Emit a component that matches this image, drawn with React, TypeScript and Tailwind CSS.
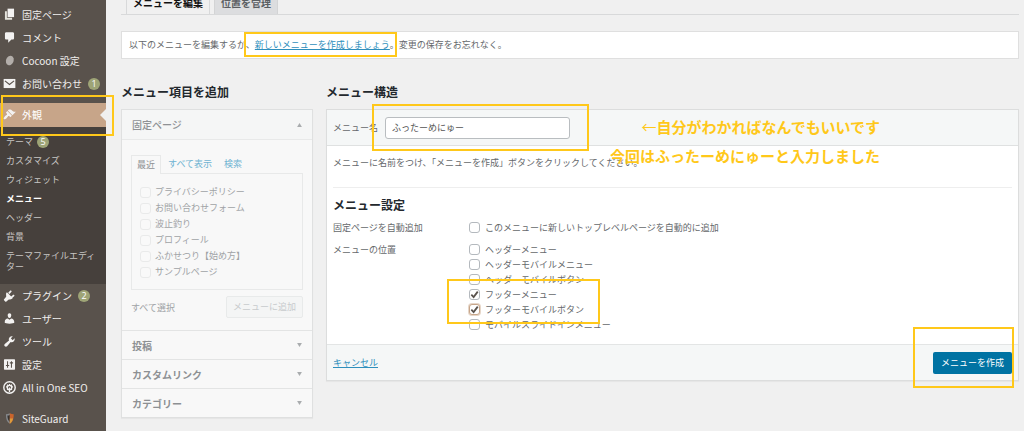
import type { ReactNode } from 'react';
import { useState } from 'react';

const FONT = "font-['Noto_Sans_CJK_JP','Noto_Sans',sans-serif]";

function Svg({ children }: { children: ReactNode }) {
  return (
    <svg viewBox="0 0 20 20" className="size-[13px] shrink-0" fill="#f3f2f1" aria-hidden="true">
      {children}
    </svg>
  );
}

const icons = {
  page: (
    <Svg>
      <path d="M7 1h10v13H7z" />
      <path d="M3 5h3v10h8v3H3z" fill="#e4e3dc" />
    </Svg>
  ),
  comment: (
    <Svg>
      <path d="M5 2h10c1.100 0 2 .9 2 2v7c0 1.100-.9 2-2 2h-2l-5 5v-5H5c-1.100 0-2-.9-2-2V4c0-1.100.9-2 2-2z" />
    </Svg>
  ),
  cocoon: (
    <Svg>
      <ellipse cx="10.500" cy="10" rx="5.800" ry="7.400" transform="rotate(22 10.500 10)" fill="#b3aeaa" />
    </Svg>
  ),
  mail: (
    <Svg>
      <path d="M1 3h18v14H1z" />
      <path d="M3 6l7 5.500L17 6" fill="none" stroke="#59524c" strokeWidth="1.800" />
    </Svg>
  ),
  brush: (
    <Svg>
      <path d="M14.480 11.060L7.410 3.990l1.500-1.500c.5-.56 2.300-.47 3.510.32 1.210.8 1.430 1.280 2.910 2.100 1.180.64 2.450 1.260 4.450.85zm-.71.710L6.700 4.700 4.930 6.470c-.39.390-.39 1.020 0 1.410l1.060 1.060c.39.390.39 1.030 0 1.420-.6.600-1.430 1.110-2.210 1.690-.35.260-.7.530-1.010.840C1.430 14.230.4 16.080 1.400 17.070c.99 1 2.840-.03 4.180-1.360.31-.31.58-.66.850-1.020.57-.78 1.080-1.610 1.690-2.210.39-.39 1.020-.39 1.410 0l1.060 1.060c.39.390 1.020.390 1.410 0z" />
    </Svg>
  ),
  plug: (
    <Svg>
      <path d="M13.110 4.360L9.870 7.600 8 5.730l3.240-3.240c.35-.34 1.050-.2 1.560.32.52.51.660 1.210.310 1.550zm-8 1.770l.91-1.120 9.010 9.010-1.190.84c-.71.710-2.630 1.160-3.820 1.160H8.900l-3.660 3.240c-.6.500-1.300.450-1.900-.1l-1.700-1.700c-.5-.6-.5-1.200 0-1.700L4.900 12v-1.190c0-1.190-.5-3.970.21-4.680zm7.260 5.970l3.240-3.240c.34-.35 1.040-.21 1.550.31.520.51.660 1.210.310 1.550l-3.240 3.250z" />
    </Svg>
  ),
  user: (
    <Svg>
      <path d="M10 9.250c-2.270 0-2.730-3.440-2.730-3.440C7 4.020 7.820 2 9.970 2c2.160 0 2.980 2.020 2.710 3.810 0 0-.41 3.440-2.680 3.440zm0 2.570L12.720 10c2.390 0 4.520 2.330 4.520 4.530v2.490s-3.650 1.130-7.240 1.130c-3.650 0-7.240-1.130-7.240-1.130v-2.490c0-2.250 1.940-4.480 4.470-4.480z" />
    </Svg>
  ),
  wrench: (
    <Svg>
      <path d="M16.680 9.770c-1.340 1.340-3.300 1.670-4.950.99l-5.410 6.520c-.99.990-2.590.990-3.580 0s-.99-2.590 0-3.570l6.520-5.420c-.68-1.650-.35-3.610.99-4.950 1.280-1.280 3.120-1.620 4.720-1.060l-2.890 2.890 2.820 2.820 2.860-2.870c.53 1.580.180 3.390-1.080 4.650z" />
    </Svg>
  ),
  sliders: (
    <Svg>
      <path d="M2.500 2h15c.6 0 1 .4 1 1v14c0 .6-.4 1-1 1h-15c-.6 0-1-.4-1-1V3c0-.6.4-1 1-1z" />
      <path d="M7 5v10M13 5v10M4.500 11.500h5M10.500 7.500h5" stroke="#59524c" strokeWidth="1.600" fill="none" />
    </Svg>
  ),
  gear: (
    <Svg>
      <circle cx="10" cy="10" r="8.800" fill="none" stroke="#f3f2f1" strokeWidth="2.200" />
      <path
        d="M10 4.500v3M4.700 9h2.500M15.300 9h-2.500M6.200 5.700l2 2M13.800 5.700l-2 2M6.300 13.500l1.700-1.500M13.700 13.500L12 12"
        stroke="#f3f2f1"
        strokeWidth="2"
      />
      <circle cx="10" cy="10" r="3.400" fill="none" stroke="#f3f2f1" strokeWidth="2" />
      <path d="M10 10v7" stroke="#f3f2f1" strokeWidth="2" />
    </Svg>
  ),
  shield: (
    <Svg>
      <path d="M10.500 2C8.500 3 6.500 3.500 4.500 3.500 4.500 11 6 15.500 10.500 18z" fill="#85888c" />
      <path d="M6.800 5.500c1.200-.1 2.700-.5 3.700-1v11C8 13.500 6.800 10 6.800 5.500z" fill="#38332f" />
      <path d="M10.500 2c2 1 4 1.500 6 1.500 0 7.500-1.500 12-6 14.500z" fill="#c9642c" />
      <path d="M10.500 10h5c-.8 3.500-2.500 6-5 8z" fill="#dd9c3c" />
    </Svg>
  ),
};

function Badge({ children }: { children: ReactNode }) {
  return (
    <span className="grid size-3 shrink-0 place-items-center rounded-full bg-[#9ea476] font-['Open_Sans',sans-serif] text-[9px] leading-none text-white">
      {children}
    </span>
  );
}

function NavItem({ icon, label, badge, active }: { icon: ReactNode; label: string; badge?: number; active?: boolean }) {
  return (
    <li>
      <a
        href="#"
        className={
          active
            ? 'relative flex h-6 items-center gap-[6px] bg-[#c7a589] pb-[2px] pl-[3px] text-white'
            : 'flex h-[23px] items-center gap-[6px] pl-[3px] text-[#f0eeec]'
        }
      >
        {icon}
        <span className="whitespace-nowrap">{label}</span>
        {badge !== undefined && <Badge>{badge}</Badge>}
        {active && (
          <>
            <span className="absolute right-0 top-[6px] border-y-6 border-r-6 border-y-transparent border-r-[#f0f0f0]" />
            <Highlight className="-bottom-[9px] -right-2 -top-2 left-[1px]" />
          </>
        )}
      </a>
    </li>
  );
}

function Highlight({ className }: { className: string }) {
  return <span className={`pointer-events-none absolute z-10 border-2 border-[#ffc81a] ${className}`} />;
}

const subItems = ['カスタマイズ', 'ウィジェット', 'メニュー', 'ヘッダー', '背景', 'テーマファイルエディター'];

function Sidebar() {
  return (
    <nav className="w-[106px] shrink-0 bg-[#59524c] pt-[3px] text-[10px]">
      <ul>
        <NavItem icon={icons.page} label="固定ページ" />
        <NavItem icon={icons.comment} label="コメント" />
        <NavItem icon={icons.cocoon} label="Cocoon 設定" />
        <NavItem icon={icons.mail} label="お問い合わせ" badge={1} />
      </ul>
      <ul className="mt-2">
        <NavItem icon={icons.brush} label="外観" active />
      </ul>
      <ul className="bg-[#46403c] pb-2 pt-[5px] text-[9px] leading-[11px] text-[#c8c6c4]">
        <li>
          <a href="#" className="flex items-center gap-1 px-[6px] py-1">
            テーマ
            <span className="-my-1">
              <Badge>5</Badge>
            </span>
          </a>
        </li>
        {subItems.map((t) => (
          <li key={t}>
            <a href="#" className={t === 'メニュー' ? 'block px-[6px] py-1 font-bold text-white' : 'block px-[6px] py-1'}>
              {t}
            </a>
          </li>
        ))}
      </ul>
      <ul>
        <NavItem icon={icons.plug} label="プラグイン" badge={2} />
        <NavItem icon={icons.user} label="ユーザー" />
        <NavItem icon={icons.wrench} label="ツール" />
        <NavItem icon={icons.sliders} label="設定" />
        <NavItem icon={icons.gear} label="All in One SEO" />
      </ul>
      <ul className="mt-2">
        <NavItem icon={icons.shield} label="SiteGuard" />
      </ul>
    </nav>
  );
}

function Check({ label, checked = false, faint, focus }: { label: string; checked?: boolean; faint?: boolean; focus?: boolean }) {
  const [on, setOn] = useState(checked);
  const border = faint
    ? 'border-[#e9eaea] bg-[#f9f9f9]'
    : focus
      ? 'border-[#c7a589] bg-white ring-1 ring-[#e6d6c8]'
      : 'border-[#b4b9be] bg-white';
  return (
    <label className={faint ? 'flex h-4 items-center gap-1' : 'flex h-[15px] items-center gap-[5px]'}>
      <span className="grid size-[11px] shrink-0 place-items-center">
        <input
          type="checkbox"
          checked={on}
          disabled={faint}
          onChange={(e) => setOn(e.target.checked)}
          className={`col-start-1 row-start-1 size-[11px] appearance-none rounded-[3px] border ${border}`}
        />
        {on && (
          <svg viewBox="0 0 10 10" className="pointer-events-none col-start-1 row-start-1 size-[9px]" fill="none" stroke="#59524c" strokeWidth="2">
            <path d="M1.500 5.200L4 7.800 8.600 1.800" />
          </svg>
        )}
      </span>
      <span className="whitespace-nowrap">{label}</span>
    </label>
  );
}

const pages = ['プライバシーポリシー', 'お問い合わせフォーム', '波止釣り', 'プロフィール', 'ふかせつり【始め方】', 'サンプルページ'];

function Arrow({ up }: { up?: boolean }) {
  return (
    <svg viewBox="0 0 6 5" className="h-1 w-[5px]" fill="#a9acae" aria-hidden="true">
      <path d={up ? 'M0 5h6L3 0z' : 'M0 0h6L3 5z'} />
    </svg>
  );
}

function AddItems() {
  return (
    <section className="w-[192px] shrink-0">
      <h2 className="text-[12px] font-bold leading-4 text-[#23282d]">メニュー項目を追加</h2>
      <div className="mt-[9px] border border-[#dfe0e0] bg-[#f8f8f8] text-[9px] text-[#a0a3a6] shadow-[0_1px_1px_rgba(0,0,0,0.04)]">
        <button className="flex h-[30px] w-full items-center justify-between border-b border-[#e8e9e9] bg-[#f5f6f6] px-[10px] text-[10px] font-medium text-[#8f9295]">
          固定ページ
          <Arrow up />
        </button>
        <div className="px-[9px] pb-3 pt-[15px]">
          <div className="flex h-[18px] items-center">
            <button className="relative z-1 -mb-px h-[19px] border border-b-0 border-[#e8e9e9] bg-[#f8f8f8] px-[5px] text-[#8f9295]">最近</button>
            <a href="#" className="ml-[7px] text-[#6fb3d2]">すべて表示</a>
            <a href="#" className="ml-3 text-[#6fb3d2]">検索</a>
          </div>
          <div className="border border-[#e8e9e9] px-2 pb-[9px] pt-[10px]">
            {pages.map((p) => (
              <Check key={p} label={p} faint />
            ))}
          </div>
          <div className="mt-[6px] flex items-center justify-between">
            <a href="#" className="pt-[2px]">すべて選択</a>
            <button disabled className="h-[22px] rounded-[2px] border border-[#e8eaea] bg-[#f4f5f5] px-[6px] text-[#c8cbcd]">
              メニューに追加
            </button>
          </div>
        </div>
        {['投稿', 'カスタムリンク', 'カテゴリー'].map((t) => (
          <button
            key={t}
            className="flex h-[29px] w-full items-center justify-between border-t border-[#e3e4e4] px-[10px] text-[10px] font-bold text-[#8d9093]"
          >
            {t}
            <Arrow />
          </button>
        ))}
      </div>
    </section>
  );
}

function Structure() {
  return (
    <section className="min-w-0 flex-1">
      <h2 className="text-[12px] font-bold leading-4 text-[#23282d]">メニュー構造</h2>
      <div className="relative mt-[9px] border border-[#dcdddd] bg-white shadow-[0_1px_1px_rgba(0,0,0,0.04)]">
        <div className="flex h-9 items-center border-b border-[#dfe1e1] bg-[#f5f7f7] px-[6px]">
          <label htmlFor="menu-name" className="mr-[7px]">メニュー名</label>
          <span className="relative">
            <Highlight className="-bottom-3 -left-[13px] -right-[19px] -top-[13px]" />
            <input
              id="menu-name"
              defaultValue="ふったーめにゅー"
              className="block h-[22px] w-[185px] rounded-[3px] border border-[#b9bdc0] bg-white px-[6px] text-[9px] text-[#555]"
            />
          </span>
        </div>
        <p className="absolute right-[138px] top-[2px] z-10 text-right text-[15px] font-bold leading-[29px] text-[#ffc81a]">
          <span className="font-normal">←</span>自分がわかればなんでもいいです
          <br />
          今回はふったーめにゅーと入力しました
        </p>
        <div className="px-[6px] pb-3">
          <p className="pt-[10px] leading-[14px]">メニューに名前をつけ、「メニューを作成」ボタンをクリックしてください。</p>
          <hr className="mt-[17px] border-[#eeeeee]" />
          <h3 className="mt-[9px] text-[12px] font-bold leading-4 text-[#23282d]">メニュー設定</h3>
          <dl className="mt-[7px] grid grid-cols-[136px_1fr] gap-y-[7px]">
            <dt className="leading-[15px]">固定ページを自動追加</dt>
            <dd>
              <Check label="このメニューに新しいトップレベルページを自動的に追加" />
            </dd>
            <dt className="leading-[15px]">メニューの位置</dt>
            <dd>
              <Check label="ヘッダーメニュー" />
              <Check label="ヘッダーモバイルメニュー" />
              <Check label="ヘッダーモバイルボタン" />
              <div className="relative w-fit">
                <Highlight className="-bottom-[7px] -left-[22px] -top-2 w-[153px]" />
                <Check label="フッターメニュー" checked />
                <Check label="フッターモバイルボタン" checked focus />
              </div>
              <Check label="モバイルスライドインメニュー" />
            </dd>
          </dl>
        </div>
        <div className="flex h-9 items-center justify-between border-t border-[#e3e5e5] bg-[#f5f7f7] px-[6px]">
          <a href="#" className="text-[#2f8fbc] underline">キャンセル</a>
          <span className="relative">
            <Highlight className="-bottom-[14px] -left-5 -right-[2px] -top-[25px]" />
            <button className="block h-[22px] rounded-[2px] bg-[#0073a3] px-2 text-white">メニューを作成</button>
          </span>
        </div>
      </div>
    </section>
  );
}

export default function App() {
  return (
    <div className={`flex min-h-screen bg-[#f0f0f0] text-[9px] text-[#65686b] ${FONT}`}>
      <Sidebar />
      <main className="min-w-0 flex-1 pl-[15px] pr-[5px]">
        <div className="flex gap-1 overflow-hidden border-b border-[#d8d9da] pl-[5px] text-[10px] font-bold leading-[14px]">
          <a href="#" className="-mb-px h-[15px] border-x border-[#d8d9da] bg-[#f0f0f0] px-[6px] text-[#111]">
            <span className="-mt-1 block">メニューを編集</span>
          </a>
          <a href="#" className="h-[14px] border-x border-[#d3d4d5] bg-[#dcdddf] px-[6px] text-[#5a5e62]">
            <span className="-mt-1 block">位置を管理</span>
          </a>
        </div>
        <div className="mt-4 flex h-7 items-center border border-[#dfdfdf] bg-white px-[7px]">
          <p className="whitespace-nowrap">
            以下のメニューを編集するか、
            <span className="relative">
              <a href="#" className="text-[#2f8fbc] underline">新しいメニューを作成しましょう</a>
              <Highlight className="-bottom-[6px] -left-[11px] -right-[7px] -top-[6px]" />
            </span>
            。変更の保存をお忘れなく。
          </p>
        </div>
        <div className="mt-[25px] flex items-start gap-[13px]">
          <AddItems />
          <Structure />
        </div>
      </main>
    </div>
  );
}
